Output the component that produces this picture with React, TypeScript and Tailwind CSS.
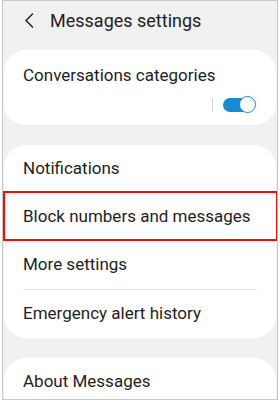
import React from 'react';

const font = { fontFamily: 'Roboto, "Liberation Sans", sans-serif' };

const Row: React.FC<{ label: string; highlighted?: boolean }> = ({ label, highlighted }) => (
  <div className="relative h-[48px] flex items-center pl-[19px] text-[17px] text-[#1e1e1e]">
    {label}
    {highlighted && (
      <div className="absolute -left-[1px] -right-[2px] -top-[2px] bottom-0 border-2 border-[#f20d0d]" />
    )}
  </div>
);

const Toggle: React.FC = () => (
  <div className="relative w-[33px] h-[17px] flex items-center">
    <div className="w-[30px] h-[14px] rounded-full bg-[#1b8bd0]" />
    <div className="absolute right-0 top-0 w-[17px] h-[17px] rounded-full bg-white border-[1.5px] border-[#1b8bd0]" />
  </div>
);

export default function App() {
  return (
    <div className="w-[280px] h-[402px] bg-white flex pl-[2px] pr-[2px] pb-[2px] overflow-hidden" style={font}>
      <div className="flex-1 border border-[#c9c9c9] bg-[#f1f1f1] flex flex-col overflow-hidden">
        <div className="h-[39px] flex items-center pl-[21px] shrink-0">
          <svg width="10" height="15" viewBox="0 0 10 15" fill="none">
            <path d="M8.5 1 L2 7.5 L8.5 14" stroke="#222" strokeWidth="1.5" strokeLinecap="round" strokeLinejoin="round" />
          </svg>
          <span className="ml-[16px] text-[18px] text-[#1e1e1e]">Messages settings</span>
        </div>

        <div className="mx-[1px] mt-[10px] h-[75px] shrink-0 rounded-[22px] bg-white pl-[19px] pr-[20px] pt-[13px]">
          <div className="text-[17px] text-[#1e1e1e] leading-[24px]">Conversations categories</div>
          <div className="flex justify-end items-center mt-[9px]">
            <div className="w-px h-[14px] bg-[#d6d6d6] mr-[10px]" />
            <Toggle />
          </div>
        </div>

        <div className="mx-[1px] mt-[20px] shrink-0 rounded-[22px] bg-white flex flex-col">
          <Row label="Notifications" />
          <Row label="Block numbers and messages" highlighted />
          <Row label="More settings" />
          <div className="mx-[19px] h-px bg-[#e6e6e6]" />
          <Row label="Emergency alert history" />
        </div>

        <div className="mx-[1px] mt-[20px] h-[80px] shrink-0 rounded-[22px] bg-white">
          <Row label="About Messages" />
        </div>
      </div>
    </div>
  );
}
